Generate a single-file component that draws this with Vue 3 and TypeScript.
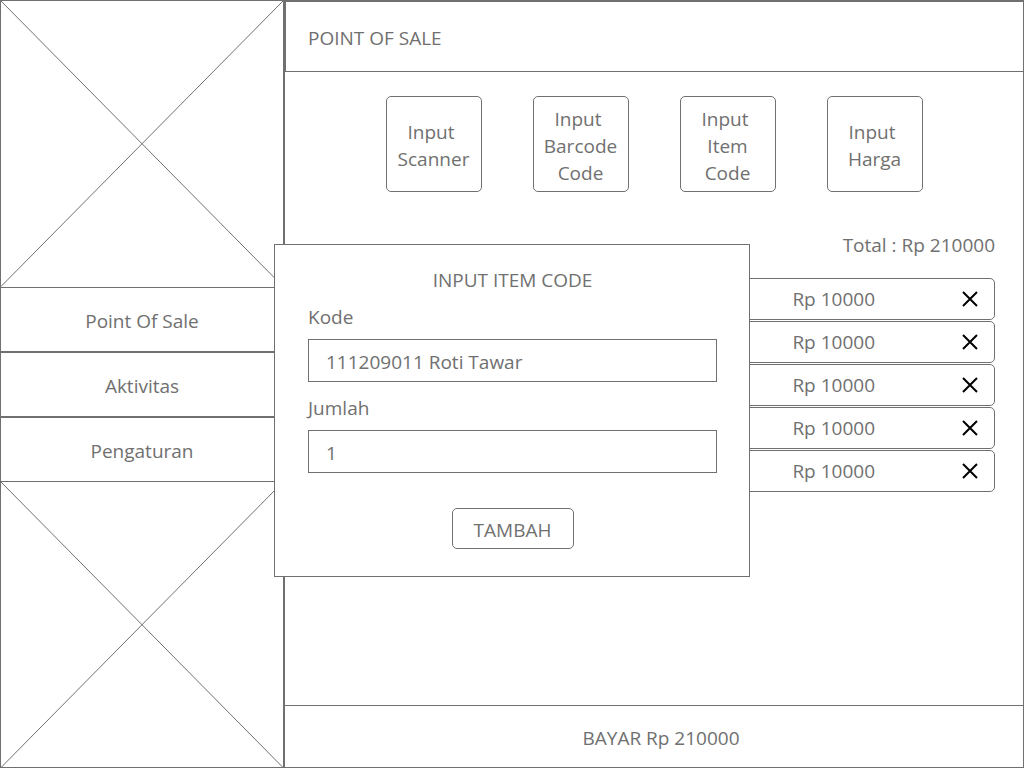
<script setup lang="ts">
import { ref } from 'vue'

interface CartItem {
  id: number
  price: number
}

const menu: string[] = ['Point Of Sale', 'Aktivitas', 'Pengaturan']

const inputModes: string[] = [
  'Input \nScanner',
  'Input \nBarcode\nCode',
  'Input \nItem\nCode',
  'Input \nHarga',
]

const items = ref<CartItem[]>([1, 2, 3, 4, 5].map((id) => ({ id, price: 10000 })))
const total = ref(210000)
const code = ref('111209011 Roti Tawar')
const quantity = ref('1')

function removeItem(id: number): void {
  items.value = items.value.filter((item) => item.id !== id)
}
</script>

<template>
  <div class="app">
    <aside class="sidebar">
      <svg class="placeholder" viewBox="0 0 100 100" preserveAspectRatio="none" aria-hidden="true">
        <path d="M0 0L100 100M100 0L0 100" />
      </svg>
      <nav class="menu">
        <a v-for="entry in menu" :key="entry" class="menu-item" href="#">{{ entry }}</a>
      </nav>
      <svg class="placeholder" viewBox="0 0 100 100" preserveAspectRatio="none" aria-hidden="true">
        <path d="M0 0L100 100M100 0L0 100" />
      </svg>
    </aside>

    <main class="main">
      <header class="header">
        <h1 class="heading">POINT OF SALE</h1>
      </header>
      <section class="content">
        <div class="modes">
          <button v-for="mode in inputModes" :key="mode" class="mode" type="button">{{ mode }}</button>
        </div>
        <p class="total">Total : Rp {{ total }}</p>
        <ul class="cart">
          <li v-for="item in items" :key="item.id" class="row">
            <span>Rp {{ item.price }}</span>
            <button class="remove" type="button" aria-label="Hapus" @click="removeItem(item.id)">
              <svg width="16" height="16" viewBox="0 0 16 16" aria-hidden="true">
                <path d="M1 1L15 15M15 1L1 15" />
              </svg>
            </button>
          </li>
        </ul>
      </section>
      <button class="pay" type="button">BAYAR Rp {{ total }}</button>
    </main>

    <div class="overlay">
      <form class="dialog" role="dialog" aria-labelledby="dialog-title" @submit.prevent>
        <h2 id="dialog-title" class="heading dialog-title">INPUT ITEM CODE</h2>
        <label class="label" for="code">Kode</label>
        <input id="code" v-model="code" class="field" type="text" />
        <label class="label next" for="quantity">Jumlah</label>
        <input id="quantity" v-model="quantity" class="field" type="text" />
        <button class="submit" type="submit">TAMBAH</button>
      </form>
    </div>
  </div>
</template>

<style>
body {
  margin: 0;
  background: #fff;
}
</style>

<style scoped>
.app {
  --line: #707070;
  position: relative;
  display: flex;
  min-height: 100vh;
  color: #707070;
  font: 19px/27px "Segoe UI", "Open Sans", sans-serif;
}

.app *,
.app {
  box-sizing: border-box;
}

button,
input {
  color: inherit;
  font: inherit;
  background: #fff;
  border: 1px solid var(--line);
  border-radius: 0;
  margin: 0;
}

button {
  cursor: pointer;
}

.heading {
  margin: 0;
  font-size: 19px;
  font-weight: 400;
}

.sidebar {
  display: flex;
  flex-direction: column;
  flex: 0 0 284px;
}

.placeholder {
  display: block;
  flex: 1 1 0;
  width: 100%;
  min-height: 0;
  border: 1px solid var(--line);
}

.placeholder path {
  fill: none;
  stroke: var(--line);
  stroke-width: 1;
  vector-effect: non-scaling-stroke;
}

/* Shares its outer borders with the placeholders above and below. */
.menu {
  margin: -1px 0;
}

.menu-item {
  display: flex;
  align-items: center;
  justify-content: center;
  height: 65px;
  padding-top: 4px;
  border: 1px solid var(--line);
  color: inherit;
  text-decoration: none;
}

.main {
  display: flex;
  flex-direction: column;
  flex: 1;
  min-width: 0;
  border: 1px solid var(--line);
}

.header {
  display: flex;
  align-items: center;
  height: 71px;
  padding: 4px 22px 0;
  border: 1px solid var(--line);
  border-right: 0;
}

.content {
  flex: 1;
  padding: 24px 28px;
}

.modes {
  display: flex;
  justify-content: center;
  gap: 51px;
}

.mode {
  width: 96px;
  height: 96px;
  padding: 4px 0 0;
  border-radius: 5px;
  white-space: pre;
}

.total {
  margin: 40px 0 19px;
  text-align: right;
}

.cart {
  display: flex;
  flex-direction: column;
  gap: 1px;
  margin: 0;
  padding: 0;
  list-style: none;
}

.row {
  display: flex;
  align-items: center;
  justify-content: flex-end;
  gap: 87px;
  height: 42px;
  padding-right: 16px;
  border: 1px solid var(--line);
  border-radius: 5px;
}

.remove {
  display: flex;
  padding: 0;
  border: 0;
}

.remove path {
  fill: none;
  stroke: #000;
  stroke-width: 2;
}

.pay {
  height: 62px;
  padding: 4px 0 0 14px;
  border-width: 1px 0 0;
}

.overlay {
  position: absolute;
  inset: 0;
  display: flex;
  align-items: flex-start;
  justify-content: center;
  padding-top: 244px;
}

.dialog {
  display: flex;
  flex-direction: column;
  width: 476px;
  max-width: 100%;
  padding: 22px 32px 27px 33px;
  border: 1px solid var(--line);
  background: #fff;
}

.dialog-title {
  margin-bottom: 10px;
  text-align: center;
}

.label {
  margin-bottom: 8px;
}

.label.next {
  margin-top: 13px;
}

.field {
  width: 100%;
  height: 43px;
  padding: 3px 17px 0;
}

.submit {
  align-self: center;
  width: 122px;
  height: 41px;
  margin-top: 35px;
  padding: 3px 0 0;
  border-radius: 5px;
}
</style>
